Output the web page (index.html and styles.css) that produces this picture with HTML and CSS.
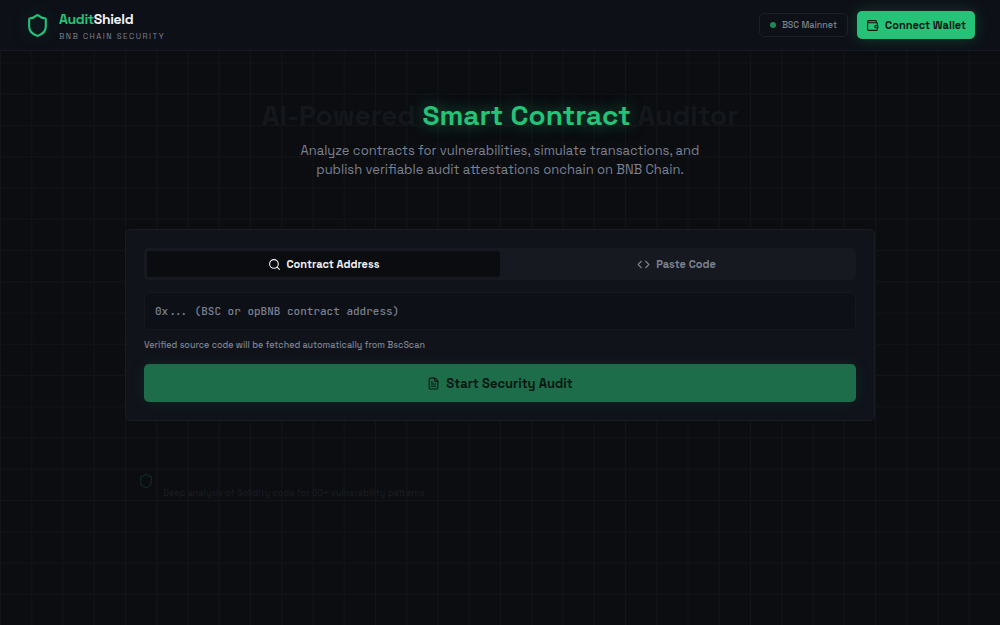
FILE: index.html
```
<!DOCTYPE html>
<html lang="en">
<head>
    <meta charset="UTF-8">
    <meta name="viewport" content="width=device-width, initial-scale=1.0">
    <title>AuditShield</title>
    <link rel="stylesheet" href="styles.css">
</head>
<body>
    <header class="header">
        <div class="brand">
            <svg class="brand-icon" viewBox="0 0 24 24"><path d="M20 13c0 5-3.500 7.500-7.660 8.950a1 1 0 0 1-.67-.01C7.500 20.500 4 18 4 13V6a1 1 0 0 1 1-1c2 0 4.500-1.200 6.240-2.720a1.170 1.170 0 0 1 1.520 0C14.510 3.810 17 5 19 5a1 1 0 0 1 1 1z"/></svg>
            <div class="brand-text">
                <div class="brand-name"><span class="green">Audit</span>Shield</div>
                <div class="brand-tag">BNB CHAIN SECURITY</div>
            </div>
        </div>
        <div class="header-actions">
            <div class="network"><span class="dot"></span>BSC Mainnet</div>
            <button class="wallet" type="button">
                <svg class="icon" viewBox="0 0 24 24"><path d="M19 7V4a1 1 0 0 0-1-1H5a2 2 0 0 0 0 4h15a1 1 0 0 1 1 1v4h-3a2 2 0 0 0 0 4h3a1 1 0 0 0 1-1v-2a1 1 0 0 0-1-1"/><path d="M3 5v14a2 2 0 0 0 2 2h15a1 1 0 0 0 1-1v-4"/></svg>
                Connect Wallet
            </button>
        </div>
    </header>

    <main class="main">
        <section class="hero">
            <h1 class="title"><span class="faded">AI-Powered</span> <span class="glow">Smart Contract</span> <span class="faded">Auditor</span></h1>
            <p class="subtitle">Analyze contracts for vulnerabilities, simulate transactions, and<br>publish verifiable audit attestations onchain on BNB Chain.</p>
        </section>

        <form class="card">
            <div class="tabs">
                <button class="tab active" type="button">
                    <svg class="icon" viewBox="0 0 24 24"><circle cx="11" cy="11" r="8"/><path d="m21 21-4.300-4.300"/></svg>
                    Contract Address
                </button>
                <button class="tab" type="button">
                    <svg class="icon" viewBox="0 0 24 24"><path d="m16 18 6-6-6-6"/><path d="m8 6-6 6 6 6"/></svg>
                    Paste Code
                </button>
            </div>
            <input class="address" id="address" type="text" placeholder="0x... (BSC or opBNB contract address)" aria-label="Contract address">
            <label class="hint" for="address">Verified source code will be fetched automatically from BscScan</label>
            <button class="submit" type="button">
                <svg class="icon" viewBox="0 0 24 24"><path d="M15 2H6a2 2 0 0 0-2 2v16a2 2 0 0 0 2 2h12a2 2 0 0 0 2-2V7z"/><path d="M14 2v4a2 2 0 0 0 2 2h4"/><path d="M10 9H8"/><path d="M16 13H8"/><path d="M16 17H8"/></svg>
                Start Security Audit
            </button>
        </form>

        <section class="features">
            <div class="feature">
                <svg class="feature-icon" viewBox="0 0 24 24"><path d="M20 13c0 5-3.500 7.500-7.660 8.950a1 1 0 0 1-.67-.01C7.500 20.500 4 18 4 13V6a1 1 0 0 1 1-1c2 0 4.500-1.200 6.240-2.720a1.170 1.170 0 0 1 1.520 0C14.510 3.810 17 5 19 5a1 1 0 0 1 1 1z"/></svg>
                <p class="feature-text">Deep analysis of Solidity code for 50+ vulnerability patterns</p>
            </div>
        </section>
    </main>
</body>
</html>
```

FILE: styles.css
```
* {
    box-sizing: border-box;
}
body {
    margin: 0;
    min-height: 100vh;
    font-family: "Space Grotesk", Inter, sans-serif;
    font-size: 11px;
    color: #f1f3f6;
    background-color: #0b0d11;
    background-image:
        linear-gradient(to right, #121418 1px, transparent 1px),
        linear-gradient(to bottom, #121418 1px, transparent 1px);
    background-size: calc(100vw / 32) calc(100vw / 32);
}
button, input {
    font-family: inherit;
    font-size: 11px;
}
button {
    display: flex;
    align-items: center;
    justify-content: center;
    gap: 6px;
    border: 0;
    padding: 0;
    font-weight: 600;
    cursor: pointer;
}
svg {
    fill: none;
    stroke: currentColor;
    stroke-width: 2;
    stroke-linecap: round;
    stroke-linejoin: round;
    flex-shrink: 0;
}
.icon {
    width: 13px;
    height: 13px;
}
.header {
    display: flex;
    align-items: center;
    justify-content: space-between;
    height: 51px;
    padding: 0 25px;
    background-color: #0d1017;
    border-bottom: 1px solid #181a20;
}
.brand {
    display: flex;
    align-items: center;
    gap: 9px;
}
.brand-icon {
    width: 25px;
    height: 25px;
    color: #26c278;
    border-radius: 50%;
    background-color: rgba(38, 194, 120, 0.04);
    box-shadow: 0 0 16px 4px rgba(38, 194, 120, 0.05);
}
.brand-name {
    font-size: 14px;
    line-height: 22px;
    font-weight: 700;
    letter-spacing: -0.025em;
}
.green {
    color: #26c278;
}
.brand-tag {
    font-size: 8px;
    line-height: 12px;
    letter-spacing: 1.5px;
    color: #7b8191;
}
.header-actions {
    display: flex;
    align-items: center;
    gap: 9px;
}
.network {
    display: flex;
    align-items: center;
    gap: 6px;
    height: 24px;
    padding: 0 10px;
    border: 1px solid #1c1f27;
    border-radius: 5px;
    font-size: 9px;
    font-weight: 500;
    color: #7b8191;
}
.dot {
    width: 6px;
    height: 6px;
    border-radius: 50%;
    background-color: #1c8656;
}
.wallet {
    height: 28px;
    padding: 0 9px;
    border-radius: 5px;
    color: #0b1512;
    background-color: #26c278;
    box-shadow: 0 0 16px rgba(38, 194, 120, 0.25);
}
.main {
    max-width: 750px;
    margin: 0 auto;
    padding: 47px 0;
}
.hero {
    text-align: center;
    margin-bottom: 50px;
}
.title {
    margin: 0 0 9px;
    font-size: 28px;
    line-height: 34px;
    font-weight: 700;
}
.faded {
    color: #14181d;
}
.glow {
    color: #26c278;
    text-shadow: 0 0 16px rgba(38, 194, 120, 0.5);
}
.subtitle {
    margin: 0;
    font-size: 13px;
    line-height: 19px;
    color: #7b8191;
}
.card {
    display: flex;
    flex-direction: column;
    padding: 18px;
    border: 1px solid #191c23;
    border-radius: 6px;
    background-color: #10131a;
}
.tabs {
    display: grid;
    grid-template-columns: 1fr 1fr;
    height: 32px;
    padding: 3px;
    border-radius: 5px;
    background-color: #161920;
}
.tab {
    border-radius: 3px;
    color: #7b8191;
    background-color: transparent;
}
.tab.active {
    color: #f1f3f6;
    background-color: #0b0c10;
}
.address {
    height: 38px;
    margin-top: 12px;
    padding: 0 10px;
    border: 1px solid #161920;
    border-radius: 5px;
    outline: 0;
    font-family: "JetBrains Mono", "DejaVu Sans Mono", monospace;
    font-weight: 500;
    color: #f1f3f6;
    background-color: #0d1017;
}
.address::placeholder {
    color: #7b8191;
}
.hint {
    margin: 9px 0 12px;
    font-size: 9px;
    line-height: 13px;
    font-weight: 500;
    color: #7b8191;
}
.submit {
    height: 38px;
    border-radius: 5px;
    font-size: 13px;
    color: #0b1512;
    background-color: #1d6d4a;
    box-shadow: 0 0 16px rgba(38, 194, 120, 0.1);
}
.features {
    display: grid;
    grid-template-columns: 1fr 1fr;
    margin-top: 39px;
}
.feature {
    display: flex;
    gap: 9px;
    padding: 13px;
}
.feature-icon {
    width: 16px;
    height: 16px;
    color: #0f2822;
}
.feature-text {
    margin: 14px 0 0;
    font-size: 9px;
    line-height: 13px;
    font-weight: 500;
    color: #191b20;
    white-space: nowrap;
}
```
